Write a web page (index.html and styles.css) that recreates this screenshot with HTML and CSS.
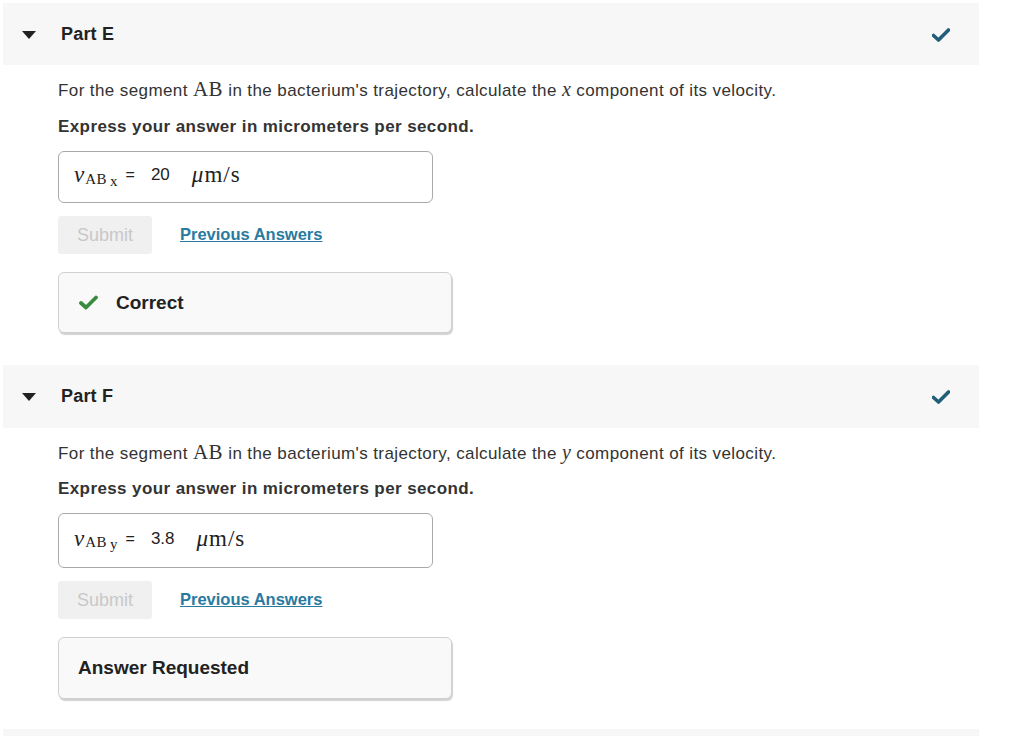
FILE: index.html
```html
<!DOCTYPE html>
<html>
<head>
<meta charset="utf-8">
<link rel="stylesheet" href="styles.css">
</head>
<body>
<div class="page">
  <section class="part part-e">
    <div class="head">
      <span class="tri"></span>
      <span class="title">Part E</span>
      <svg class="done" width="18" height="14" viewBox="0 0 18 14"><path d="M1.5 7.5 L6.5 12 L16.5 2" fill="none" stroke="#215e7a" stroke-width="3.6" stroke-linecap="round" stroke-linejoin="round"/></svg>
    </div>
    <div class="body">
      <p class="q">For the segment <span class="m">AB</span> in the bacterium's trajectory, calculate the <span class="mi">x</span> component of its velocity.</p>
      <p class="ins">Express your answer in micrometers per second.</p>
      <div class="input">
        <span class="mi v">v</span><span class="sub">AB</span><span class="sub2">x</span><span class="eq">=</span><span class="val">20</span><span class="unit"><span class="mi">μ</span>m/s</span>
      </div>
      <div class="actions">
        <button class="submit">Submit</button>
        <a class="prev" href="#">Previous Answers</a>
      </div>
      <div class="fb">
        <svg class="ok" width="19" height="15" viewBox="0 0 19 15"><path d="M2 8 L7 12.5 L17 2.5" fill="none" stroke="#3a8a3f" stroke-width="3.8" stroke-linecap="round" stroke-linejoin="round"/></svg>
        <span>Correct</span>
      </div>
    </div>
  </section>
  <section class="part part-f">
    <div class="head">
      <span class="tri"></span>
      <span class="title">Part F</span>
      <svg class="done" width="18" height="14" viewBox="0 0 18 14"><path d="M1.5 7.5 L6.5 12 L16.5 2" fill="none" stroke="#215e7a" stroke-width="3.6" stroke-linecap="round" stroke-linejoin="round"/></svg>
    </div>
    <div class="body">
      <p class="q">For the segment <span class="m">AB</span> in the bacterium's trajectory, calculate the <span class="mi">y</span> component of its velocity.</p>
      <p class="ins">Express your answer in micrometers per second.</p>
      <div class="input tall">
        <span class="mi v">v</span><span class="sub">AB</span><span class="sub2">y</span><span class="eq">=</span><span class="val">3.8</span><span class="unit"><span class="mi">μ</span>m/s</span>
      </div>
      <div class="actions">
        <button class="submit">Submit</button>
        <a class="prev" href="#">Previous Answers</a>
      </div>
      <div class="fb fb-req">
        <span>Answer Requested</span>
      </div>
    </div>
  </section>
  <div class="next-head"></div>
</div>
</body>
</html>
```
FILE: styles.css
```css
* { box-sizing: border-box; }
html, body { margin: 0; padding: 0; background: #fff; }
body {
  font-family: "Liberation Sans", Arial, sans-serif;
  color: #333;
  width: 1024px;
  height: 736px;
  overflow: hidden;
}
.page {
  margin-left: 3px;
  width: 976px;
  padding-top: 3px;
}
.part-f { margin-top: 32px; }
.head {
  height: 62px;
  background: #f7f7f7;
  display: flex;
  align-items: center;
  padding-left: 19px;
  padding-right: 29px;
}
.part-f .head { height: 63px; }
.tri {
  width: 0; height: 0;
  border-left: 7px solid transparent;
  border-right: 7px solid transparent;
  border-top: 8px solid #222;
  margin-right: 25px;
  margin-top: 1px;
}
.title {
  font-weight: bold;
  font-size: 18px;
  letter-spacing: 0.2px;
  color: #222;
  flex: 1;
}
.done { margin-top: 1px; }
.body {
  padding-left: 55px;
}
p { margin: 0; }
.q {
  margin-top: 14px;
  font-size: 17px;
  line-height: 20px;
  color: #333;
  letter-spacing: 0.4px;
}
.m {
  font-family: "Liberation Serif", "Times New Roman", serif;
  font-size: 21px;
  letter-spacing: 0.5px;
}
.q .mi { font-size: 20px; }
.mi {
  font-family: "Liberation Serif", "Times New Roman", serif;
  font-style: italic;
  font-size: 19px;
}
.ins {
  margin-top: 16px;
  font-size: 17px;
  line-height: 20px;
  font-weight: bold;
  color: #333;
  letter-spacing: 0.4px;
}
.input {
  margin-top: 14px;
  width: 375px;
  height: 52px;
  border: 1px solid #aaa;
  border-radius: 6px;
  display: flex;
  align-items: center;
  padding-left: 15px;
  padding-bottom: 4px;
  color: #222;
}
.part-f .q { margin-top: 14px; }
.part-f .ins { margin-top: 15px; }
.part-f .input { margin-top: 14px; height: 55px; }
.v { font-size: 23px; }
.sub {
  font-family: "Liberation Serif", "Times New Roman", serif;
  font-size: 15px;
  position: relative;
  top: 4px;
  margin-left: 1px;
  letter-spacing: 0.5px;
}
.sub2 {
  font-family: "Liberation Serif", "Times New Roman", serif;
  font-size: 15px;
  position: relative;
  top: 6px;
  margin-left: 3px;
}
.eq {
  font-size: 16px;
  margin-left: 8px;
  margin-right: 16px;
}
.val { font-size: 17px; margin-right: 22px; }
.unit {
  font-family: "Liberation Serif", "Times New Roman", serif;
  font-size: 23px;
  letter-spacing: 1px;
}
.unit .mi { font-size: 23px; }
.actions {
  margin-top: 13px;
  display: flex;
  align-items: center;
}
.submit {
  width: 94px;
  height: 38px;
  border: 0;
  border-radius: 3px;
  background: #f0f0f0;
  color: #c8c8c8;
  font-family: "Liberation Sans", Arial, sans-serif;
  font-size: 18px;
  padding: 0;
}
.prev {
  margin-left: 28px;
  color: #2a7aa0;
  font-weight: bold;
  font-size: 16.5px;
  text-decoration: underline;
  margin-top: -2px;
}
.fb {
  margin-top: 18px;
  width: 394px;
  height: 61px;
  border: 1px solid #d0d0d0;
  border-radius: 6px;
  background: #f9f9f9;
  box-shadow: 1px 2px 1px rgba(0,0,0,0.18);
  display: flex;
  align-items: center;
  padding-left: 20px;
  font-weight: bold;
  font-size: 19px;
  color: #222;
}
.fb .ok { margin-right: 18px; }
.fb-req { height: 62px; padding-left: 19px; }
.next-head {
  margin-top: 30px;
  height: 10px;
  background: #f7f7f7;
}
```
